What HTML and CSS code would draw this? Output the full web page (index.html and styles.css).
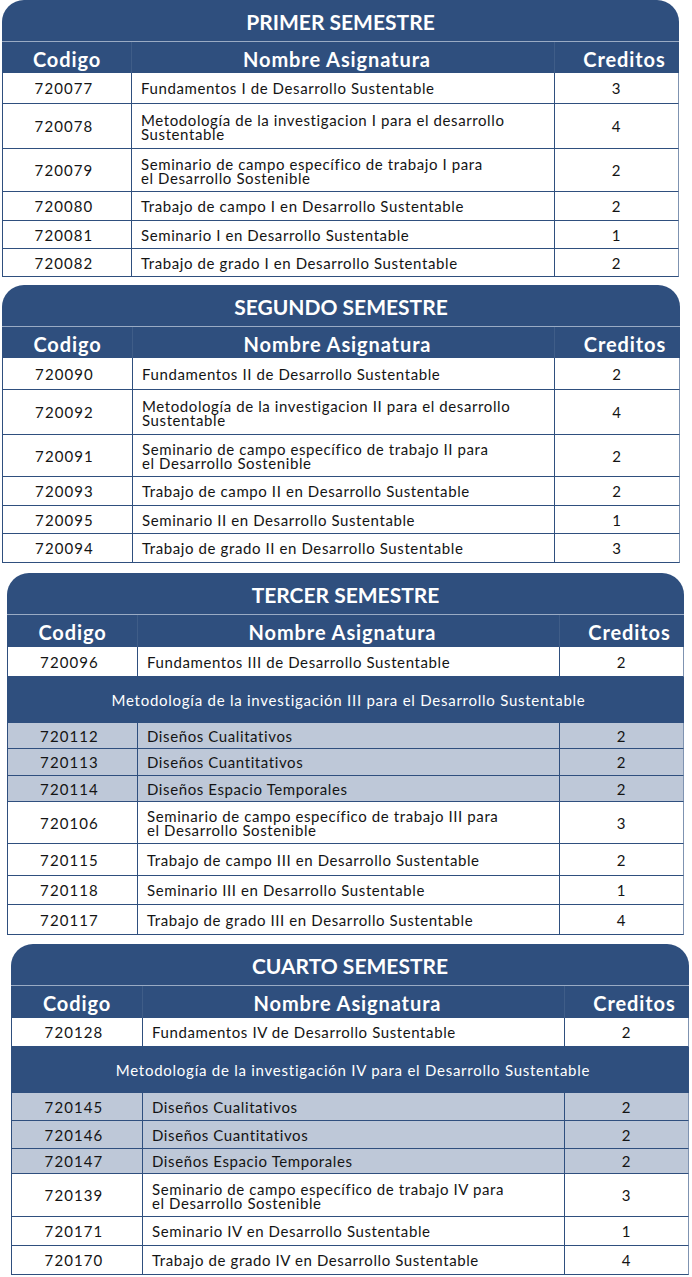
FILE: index.html
```html
<!DOCTYPE html>
<html lang="es">
<head>
<meta charset="utf-8">
<title>Plan de estudios</title>
<link rel="stylesheet" href="styles.css">
</head>
<body>
<div class="page">

  <section class="sem s1">
    <div class="title">PRIMER SEMESTRE</div>
    <div class="row head h31"><div class="c code">Codigo</div><div class="c name">Nombre Asignatura</div><div class="c cred">Creditos</div></div>
    <div class="row h31"><div class="c code">720077</div><div class="c name">Fundamentos I de Desarrollo Sustentable</div><div class="c cred">3</div></div>
    <div class="row h45"><div class="c code">720078</div><div class="c name wrap">Metodología de la investigacion I para el desarrollo<br>Sustentable</div><div class="c cred">4</div></div>
    <div class="row h43"><div class="c code">720079</div><div class="c name wrap">Seminario de campo específico de trabajo I para<br>el Desarrollo Sostenible</div><div class="c cred">2</div></div>
    <div class="row h29"><div class="c code">720080</div><div class="c name">Trabajo de campo I en Desarrollo Sustentable</div><div class="c cred">2</div></div>
    <div class="row h28"><div class="c code">720081</div><div class="c name">Seminario I en Desarrollo Sustentable</div><div class="c cred">1</div></div>
    <div class="row h28"><div class="c code">720082</div><div class="c name">Trabajo de grado I en Desarrollo Sustentable</div><div class="c cred">2</div></div>
  </section>

  <section class="sem s2">
    <div class="title">SEGUNDO SEMESTRE</div>
    <div class="row head h31"><div class="c code">Codigo</div><div class="c name">Nombre Asignatura</div><div class="c cred">Creditos</div></div>
    <div class="row h32"><div class="c code">720090</div><div class="c name">Fundamentos II de Desarrollo Sustentable</div><div class="c cred">2</div></div>
    <div class="row h45"><div class="c code">720092</div><div class="c name wrap">Metodología de la investigacion II para el desarrollo<br>Sustentable</div><div class="c cred">4</div></div>
    <div class="row h42"><div class="c code">720091</div><div class="c name wrap">Seminario de campo específico de trabajo II para<br>el Desarrollo Sostenible</div><div class="c cred">2</div></div>
    <div class="row h29"><div class="c code">720093</div><div class="c name">Trabajo de campo II en Desarrollo Sustentable</div><div class="c cred">2</div></div>
    <div class="row h28"><div class="c code">720095</div><div class="c name">Seminario II en Desarrollo Sustentable</div><div class="c cred">1</div></div>
    <div class="row h29"><div class="c code">720094</div><div class="c name">Trabajo de grado II en Desarrollo Sustentable</div><div class="c cred">3</div></div>
  </section>

  <section class="sem s3">
    <div class="title">TERCER SEMESTRE</div>
    <div class="row head h32"><div class="c code">Codigo</div><div class="c name">Nombre Asignatura</div><div class="c cred">Creditos</div></div>
    <div class="row h30"><div class="c code">720096</div><div class="c name">Fundamentos III de Desarrollo Sustentable</div><div class="c cred">2</div></div>
    <div class="band h46">Metodología de la investigación III para el Desarrollo Sustentable</div>
    <div class="row gray h26"><div class="c code">720112</div><div class="c name">Diseños Cualitativos</div><div class="c cred">2</div></div>
    <div class="row gray h27"><div class="c code">720113</div><div class="c name">Diseños Cuantitativos</div><div class="c cred">2</div></div>
    <div class="row gray h26"><div class="c code">720114</div><div class="c name">Diseños Espacio Temporales</div><div class="c cred">2</div></div>
    <div class="row h42"><div class="c code">720106</div><div class="c name wrap">Seminario de campo específico de trabajo III para<br>el Desarrollo Sostenible</div><div class="c cred">3</div></div>
    <div class="row h32"><div class="c code">720115</div><div class="c name">Trabajo de campo III en Desarrollo Sustentable</div><div class="c cred">2</div></div>
    <div class="row h29"><div class="c code">720118</div><div class="c name">Seminario III en Desarrollo Sustentable</div><div class="c cred">1</div></div>
    <div class="row h30"><div class="c code">720117</div><div class="c name">Trabajo de grado III en Desarrollo Sustentable</div><div class="c cred">4</div></div>
  </section>

  <section class="sem s4">
    <div class="title">CUARTO SEMESTRE</div>
    <div class="row head h32"><div class="c code">Codigo</div><div class="c name">Nombre Asignatura</div><div class="c cred">Creditos</div></div>
    <div class="row h29"><div class="c code">720128</div><div class="c name">Fundamentos IV de Desarrollo Sustentable</div><div class="c cred">2</div></div>
    <div class="band h46">Metodología de la investigación IV para el Desarrollo Sustentable</div>
    <div class="row gray h28"><div class="c code">720145</div><div class="c name">Diseños Cualitativos</div><div class="c cred">2</div></div>
    <div class="row gray h28"><div class="c code">720146</div><div class="c name">Diseños Cuantitativos</div><div class="c cred">2</div></div>
    <div class="row gray h25"><div class="c code">720147</div><div class="c name">Diseños Espacio Temporales</div><div class="c cred">2</div></div>
    <div class="row h43"><div class="c code">720139</div><div class="c name wrap">Seminario de campo específico de trabajo IV para<br>el Desarrollo Sostenible</div><div class="c cred">3</div></div>
    <div class="row h29"><div class="c code">720171</div><div class="c name">Seminario IV en Desarrollo Sustentable</div><div class="c cred">1</div></div>
    <div class="row h29"><div class="c code">720170</div><div class="c name">Trabajo de grado IV en Desarrollo Sustentable</div><div class="c cred">4</div></div>
  </section>

</div>
</body>
</html>
```

FILE: styles.css
```css
* { box-sizing: border-box; }

html, body {
  margin: 0;
  padding: 0;
  background: #ffffff;
}

body {
  font-family: "Lato", "DejaVu Sans", sans-serif;
  color: #141414;
  width: 692px;
}

.page {
  display: flex;
  flex-direction: column;
}

.sem {
  display: flex;
  flex-direction: column;
}

.s1 { margin-left: 2px; width: 677px; }
.s2 { margin-left: 2px; width: 678px; margin-top: 8px; }
.s3 { margin-left: 7px; width: 677px; margin-top: 10px; }
.s4 { margin-left: 11px; width: 678px; margin-top: 9px; }

.s1 .row { grid-template-columns: 128px 423px 1fr; }
.s2 .row { grid-template-columns: 129px 422px 1fr; }
.s3 .row { grid-template-columns: 129px 422px 1fr; }
.s4 .row { grid-template-columns: 130px 422px 1fr; }

.title {
  height: 42px;
  background: #2f4f7e;
  color: #ffffff;
  border-radius: 22px 22px 0 0;
  border-bottom: 1px solid #9aabc4;
  display: flex;
  align-items: center;
  justify-content: center;
  font-weight: 700;
  font-size: 21px;
  letter-spacing: 0;
  padding-top: 2px;
}

.row {
  display: grid;
  border-bottom: 1px solid #2f4f7e;
  border-left: 1px solid #2f4f7e;
  border-right: 1px solid #7f93b1;
  background: #ffffff;
}

.row.gray { background: #bec8d8; }

.c {
  display: flex;
  align-items: center;
  font-size: 15px;
  letter-spacing: 0.6px;
  white-space: nowrap;
}

.c + .c { border-left: 1px solid #2f4f7e; }

.code {
  justify-content: center;
  padding-right: 6px;
  letter-spacing: 1.1px;
}

.name {
  padding-left: 9px;
}

.cred {
  justify-content: center;
}

.wrap {
  line-height: 14px;
  padding-top: 1px;
}

.head {
  background: #2f4f7e;
  border-color: #2f4f7e;
  border-bottom: none;
}

.head .c {
  color: #ffffff;
  font-weight: 700;
  font-size: 20px;
  letter-spacing: 0.9px;
  padding-top: 2px;
}

.head .c + .c { border-left: 1px solid #3f5d88; }

.head .name { justify-content: center; padding-left: 0; padding-right: 12px; }
.head .cred { padding-left: 16px; }
.head .code { padding-right: 0; }

.band {
  background: #2f4f7e;
  color: #ffffff;
  display: flex;
  align-items: center;
  justify-content: center;
  font-size: 15px;
  letter-spacing: 0.75px;
  border-bottom: 1px solid #2f4f7e;
  padding-left: 6px;
}

.h25 { height: 25px; }
.h26 { height: 26px; }
.h27 { height: 27px; }
.h28 { height: 28px; }
.h29 { height: 29px; }
.h30 { height: 30px; }
.h31 { height: 31px; }
.h32 { height: 32px; }
.h42 { height: 42px; }
.h43 { height: 43px; }
.h45 { height: 45px; }
.h46 { height: 46px; }
```
